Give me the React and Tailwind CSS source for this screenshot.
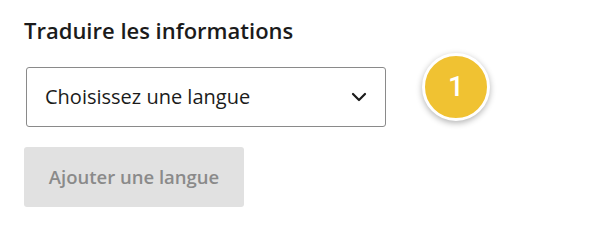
import React from 'react';

function Chevron() {
  return (
    <svg width="16" height="10" viewBox="0 0 16 10" fill="none" className="text-[#1b1b1b]">
      <path d="M2 2l6 6 6-6" stroke="currentColor" strokeWidth="2.2" strokeLinecap="round" strokeLinejoin="round" />
    </svg>
  );
}

export default function App() {
  return (
    <div className="w-[601px] h-[228px] bg-white font-['Open_Sans','Noto_Sans',sans-serif] pl-6 pt-[16px]">
      <h2 className="text-[22px] leading-[28px] font-semibold text-[#1b1b1b]">Traduire les informations</h2>
      <div className="flex items-start mt-[23px]">
        <div className="flex flex-col gap-5">
          <button className="ml-[2px] w-[360px] h-[60px] border border-[#8a8a8a] rounded-[3px] flex items-center justify-between pl-[18px] pr-[18px] bg-white">
            <span className="text-[20px] text-[#1b1b1b]">Choisissez une langue</span>
            <Chevron />
          </button>
          <button className="w-[220px] h-[60px] rounded-[3px] bg-[#e1e1e1] text-[#8a8a8a] text-[18.5px] font-semibold">
            Ajouter une langue
          </button>
        </div>
        <div className="ml-[36px] -mt-[14px] w-[68px] h-[68px] rounded-full border-[3px] border-white bg-[#f0c232] shadow-[0_2px_6px_rgba(0,0,0,0.3)] flex items-center justify-center text-white text-[28px] font-medium font-['Roboto',sans-serif]">
          1
        </div>
      </div>
    </div>
  );
}
